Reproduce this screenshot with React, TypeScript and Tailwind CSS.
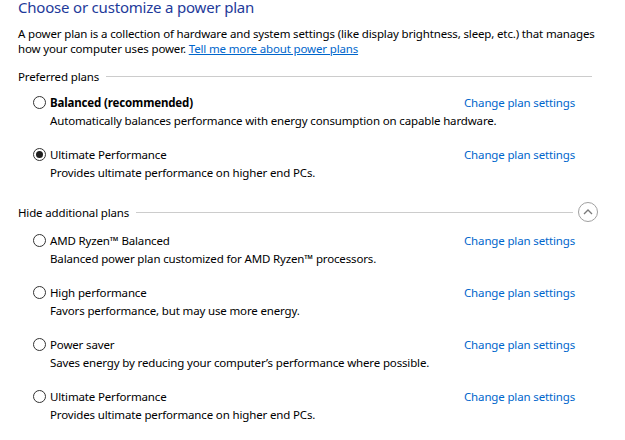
import React from "react";

type Plan = { name: string; desc: string; bold?: boolean; checked?: boolean };

const preferred: Plan[] = [
  {
    name: "Balanced (recommended)",
    desc: "Automatically balances performance with energy consumption on capable hardware.",
    bold: true,
  },
  {
    name: "Ultimate Performance",
    desc: "Provides ultimate performance on higher end PCs.",
    checked: true,
  },
];

const additional: Plan[] = [
  { name: "AMD Ryzen™ Balanced", desc: "Balanced power plan customized for AMD Ryzen™ processors." },
  { name: "High performance", desc: "Favors performance, but may use more energy." },
  { name: "Power saver", desc: "Saves energy by reducing your computer’s performance where possible." },
  { name: "Ultimate Performance", desc: "Provides ultimate performance on higher end PCs." },
];

function Radio({ checked }: { checked?: boolean }) {
  return (
    <span className="flex h-[13px] w-[13px] shrink-0 items-center justify-center rounded-full border border-[#333333] bg-white">
      {checked && <span className="h-[7px] w-[7px] rounded-full bg-[#1f1f1f]" />}
    </span>
  );
}

function PlanRow({ plan, first }: { plan: Plan; first?: boolean }) {
  return (
    <div className={first ? "" : "mt-[19px]"}>
      <div className="flex h-[15px] items-center">
        <div className="flex w-[446px] items-center gap-[4px] pl-[15px]">
          <Radio checked={plan.checked} />
          <span className={plan.bold ? "font-bold text-black" : "text-black"}>{plan.name}</span>
        </div>
        <a className="cursor-pointer text-[#0066cc]">Change plan settings</a>
      </div>
      <div className="mt-[3px] h-[15px] pl-[32px] text-black">{plan.desc}</div>
    </div>
  );
}

export default function App() {
  return (
    <div
      className="h-[440px] w-[625px] overflow-hidden whitespace-nowrap bg-white pl-[18px] text-[11.5px] leading-[15px] tracking-[-0.15px]"
      style={{ fontFamily: '"Segoe UI", "Noto Sans", sans-serif' }}
    >
      <h1 className="-mt-[3px] h-[20px] text-[15px] leading-[20px] tracking-[-0.2px] text-[#1e3a9a]">
        Choose or customize a power plan
      </h1>
      <p className="mt-[9px] text-black">
        A power plan is a collection of hardware and system settings (like display brightness, sleep, etc.) that manages
        <br />
        how your computer uses power.{" "}
        <a className="cursor-pointer text-[#0066cc] underline">Tell me more about power plans</a>
      </p>

      <div className="mt-[13px] flex h-[15px] w-[574px] items-center gap-[7px]">
        <span className="text-black">Preferred plans</span>
        <span className="h-px flex-1 bg-[#cccccc]" />
      </div>

      <div className="mt-[11px]">
        {preferred.map((p, i) => (
          <PlanRow key={i} plan={p} first={i === 0} />
        ))}
      </div>

      <div className="mt-[22px] flex h-[20px] w-[580px] items-center">
        <span className="text-black">Hide additional plans</span>
        <span className="ml-[7px] h-px flex-1 bg-[#cccccc]" />
        <span className="ml-[5px] flex h-[20px] w-[20px] items-center justify-center rounded-full border border-[#a0a0a0]">
          <svg width="10" height="6" viewBox="0 0 10 6" fill="none">
            <path d="M1 5 L5 1 L9 5" stroke="#7a7a7a" strokeWidth="1.3" />
          </svg>
        </span>
      </div>

      <div className="mt-[11px]">
        {additional.map((p, i) => (
          <PlanRow key={i} plan={p} first={i === 0} />
        ))}
      </div>
    </div>
  );
}
